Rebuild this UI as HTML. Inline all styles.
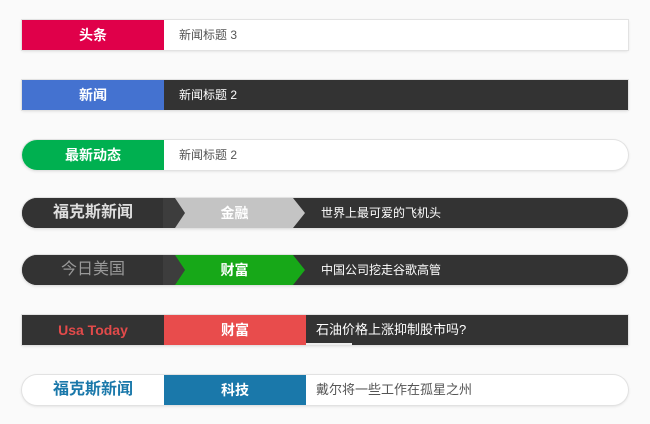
<!DOCTYPE html>
<html><head><meta charset="utf-8"><style>
body{margin:0;width:650px;height:424px;background:#fafafa;font-family:"Liberation Sans","Noto Sans CJK SC",sans-serif;position:relative;overflow:hidden}
.bar{position:absolute;left:22px;width:606px;height:30px;box-shadow:0 0 0 1px #e2e2e2,0 1px 3px rgba(0,0,0,.15);overflow:hidden;background:#fff}
.lab{position:absolute;left:0;top:0;height:30px;width:142px;text-align:center;line-height:30px;color:#fff;font-weight:bold;font-size:14px}
.txt{position:absolute;top:0;height:30px;line-height:30px;font-size:12px;color:#555}
.r{border-radius:15px}
.sec{position:absolute;top:0;height:30px;line-height:30px;text-align:center;color:#fff;font-weight:bold;font-size:14px}
</style></head><body>

<div class="bar" style="top:20px"><div class="lab" style="background:#e0004a">头条</div><div class="txt" style="left:157px">新闻标题 3</div></div>

<div class="bar" style="top:80px;background:#333"><div class="lab" style="background:#4472d0">新闻</div><div class="txt" style="left:157px;color:#fff">新闻标题 2</div></div>

<div class="bar r" style="top:140px"><div class="lab" style="background:#00b050">最新动态</div><div class="txt" style="left:157px">新闻标题 2</div></div>

<div class="bar r" style="top:198px;background:#333">
<div class="lab" style="background:#333;font-size:16px;color:#ddd">福克斯新闻</div>
<svg style="position:absolute;left:141px;top:0" width="150" height="30"><polygon points="0,0 12,0 22,15 12,30 0,30" fill="#3d3d3d"/><polygon points="12,0 130,0 142,15 130,30 12,30 22,15" fill="#c4c4c4"/></svg>
<div class="sec" style="left:175px;width:75px">金融</div>
<div class="txt" style="left:299px;color:#fff">世界上最可爱的飞机头</div></div>

<div class="bar r" style="top:255px;background:#333">
<div class="lab" style="background:#333;font-weight:normal;font-size:16px;color:#999">今日美国</div>
<svg style="position:absolute;left:141px;top:0" width="150" height="30"><polygon points="0,0 12,0 22,15 12,30 0,30" fill="#3d3d3d"/><polygon points="12,0 130,0 142,15 130,30 12,30 22,15" fill="#17a818"/></svg>
<div class="sec" style="left:175px;width:75px">财富</div>
<div class="txt" style="left:299px;color:#fff">中国公司挖走谷歌高管</div></div>

<div class="bar" style="top:315px;background:#333">
<div class="lab" style="background:#333;color:#e24a4a;font-size:14px">Usa Today</div>
<div class="sec" style="left:142px;width:142px;background:#e84c4c">财富</div>
<div class="txt" style="left:294px;color:#fff;font-size:13px">石油价格上涨抑制股市吗?</div>
<div style="position:absolute;left:284px;top:28px;width:46px;height:2px;background:#eee"></div></div>

<div class="bar r" style="top:375px">
<div class="lab" style="color:#1a78aa;font-size:16px">福克斯新闻</div>
<div class="sec" style="left:142px;width:142px;background:#1a78aa">科技</div>
<div class="txt" style="left:294px;font-size:13px">戴尔将一些工作在孤星之州</div></div>

</body></html>
